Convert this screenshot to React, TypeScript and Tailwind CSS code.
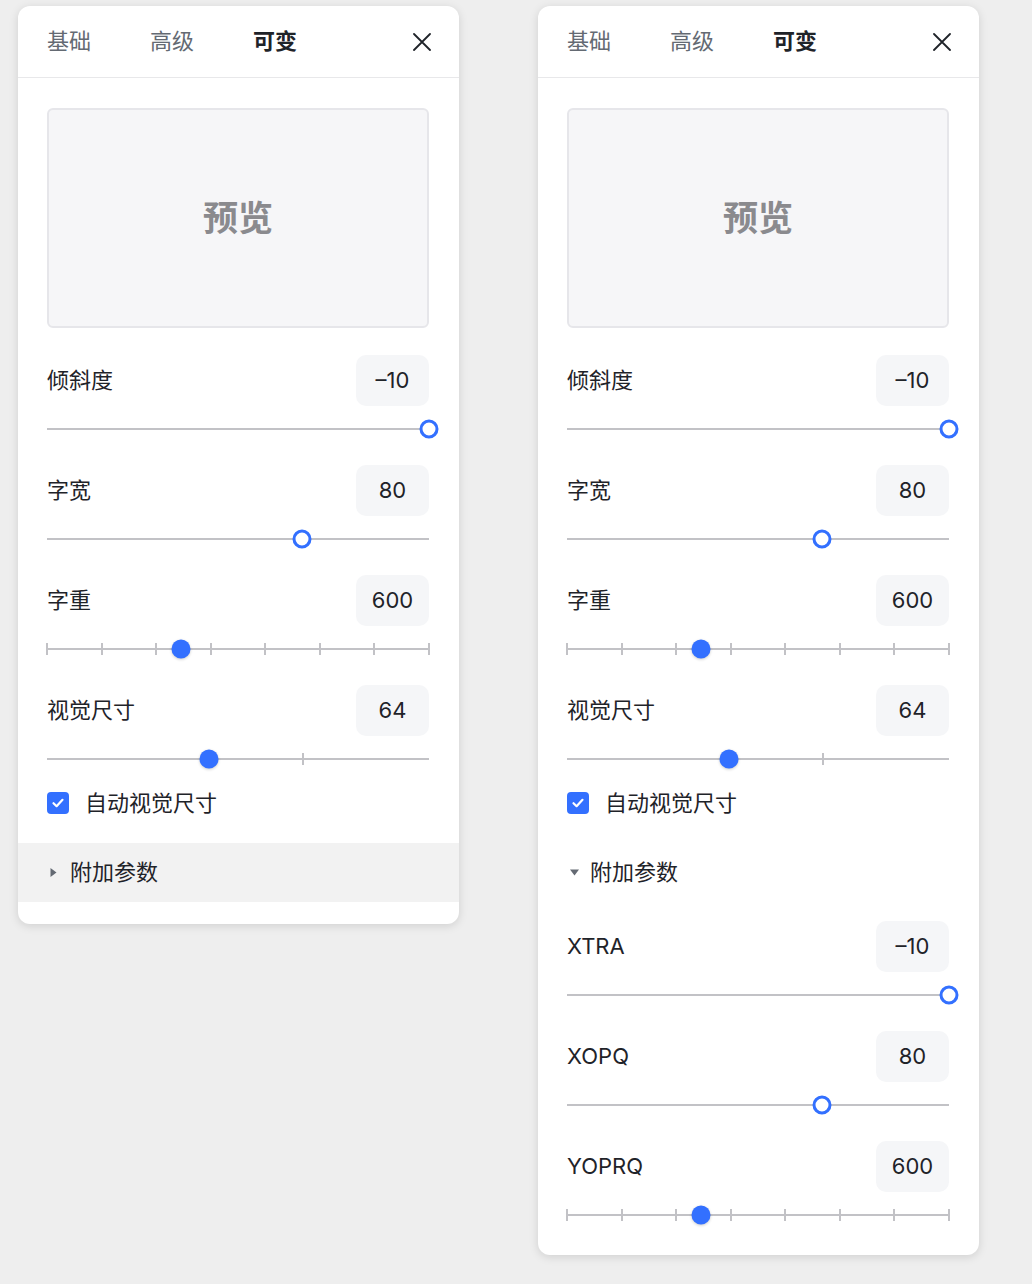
import type { ReactNode } from "react";

type SliderProps = {
  pct: number;
  hollow?: boolean;
  ticks?: number[];
};

function Slider({ pct, hollow = false, ticks = [] }: SliderProps) {
  return (
    <div className="relative flex h-[45px] items-center">
      <div className="h-[2px] w-full bg-[#c2c2c6]" />
      {ticks.map((tick) => (
        <div
          className="absolute top-1/2 h-[12px] w-[2px] -translate-x-1/2 -translate-y-1/2 bg-[#c2c2c6]"
          key={tick}
          style={{ left: `${tick}%` }}
        />
      ))}
      {hollow ? (
        <div
          className="absolute top-1/2 h-[19px] w-[19px] -translate-x-1/2 -translate-y-1/2 rounded-full border-[3px] border-[#3370ff] bg-white"
          style={{ left: `${pct}%` }}
        />
      ) : (
        <div
          className="absolute top-1/2 h-[19px] w-[19px] -translate-x-1/2 -translate-y-1/2 rounded-full bg-[#3370ff] shadow-[0_1px_3px_rgba(0,0,0,0.2)]"
          style={{ left: `${pct}%` }}
        />
      )}
    </div>
  );
}

function ParamRow({ label, value, children }: { label: string; value: string; children: ReactNode }) {
  return (
    <div>
      <div className="flex h-[51px] items-center justify-between">
        <span className="text-[22px] text-[#1f2329]">{label}</span>
        <div className="flex h-[51px] w-[73px] items-center justify-center rounded-[10px] bg-[#f5f6f8] text-[22px] text-[#1f2329]">
          {value}
        </div>
      </div>
      {children}
    </div>
  );
}

const eightTicks = [0, 100 / 7, 200 / 7, 300 / 7, 400 / 7, 500 / 7, 600 / 7, 100];

function CloseIcon() {
  return (
    <svg className="h-[18px] w-[18px]" fill="none" viewBox="0 0 18 18">
      <path d="M1 1L17 17M17 1L1 17" stroke="#1f2329" strokeLinecap="round" strokeWidth="1.8" />
    </svg>
  );
}

function Panel({ expanded }: { expanded: boolean }) {
  return (
    <div className="w-[441px] overflow-hidden rounded-[12px] bg-white shadow-[0_2px_10px_rgba(0,0,0,0.13)]">
      <div className="flex h-[72px] items-center border-b border-[#e8e8ea] pl-[29px] pr-[28px]">
        <span className="w-[103px] text-[22px] text-[#646a73]">基础</span>
        <span className="w-[103px] text-[22px] text-[#646a73]">高级</span>
        <span className="text-[22px] font-semibold text-[#1f2329]">可变</span>
        <button className="ml-auto flex items-center" type="button">
          <CloseIcon />
        </button>
      </div>

      <div className="pl-[29px] pr-[30px] pt-[30px]">
        <div className="flex h-[220px] items-center justify-center rounded-[6px] border-2 border-[#e6e6ea] bg-[#f6f6f8]">
          <span className="text-[35px] font-semibold text-[#8a8a8e]">预览</span>
        </div>

        <div className="mt-[27px] flex flex-col gap-[14px]">
          <ParamRow label="倾斜度" value="–10">
            <Slider hollow pct={100} />
          </ParamRow>
          <ParamRow label="字宽" value="80">
            <Slider hollow pct={66.75} />
          </ParamRow>
          <ParamRow label="字重" value="600">
            <Slider pct={35} ticks={eightTicks} />
          </ParamRow>
          <ParamRow label="视觉尺寸" value="64">
            <Slider pct={42.4} ticks={[67]} />
          </ParamRow>
        </div>

        <div className="mt-[11px] flex h-[22px] items-center">
          <div className="flex h-[22px] w-[22px] items-center justify-center rounded-[4px] bg-[#3370ff]">
            <svg className="h-[14px] w-[14px]" fill="none" viewBox="0 0 14 14">
              <path d="M2.5 7.2L5.6 10.2L11.5 3.8" stroke="white" strokeLinecap="round" strokeLinejoin="round" strokeWidth="2.2" />
            </svg>
          </div>
          <span className="ml-[16px] text-[22px] leading-none text-[#1f2329]">自动视觉尺寸</span>
        </div>
      </div>

      <div className={expanded ? "mt-[29px] flex h-[59px] items-center pl-[32px]" : "mt-[29px] flex h-[59px] items-center bg-[#f2f2f2] pl-[32px]"}>
        <div className="flex w-[20px] items-center">
          {expanded ? (
            <svg className="h-[7px] w-[9px]" viewBox="0 0 9 7">
              <path d="M0 0.5H9L4.5 6.5Z" fill="#646a73" />
            </svg>
          ) : (
            <svg className="h-[9px] w-[7px]" viewBox="0 0 7 9">
              <path d="M0.5 0V9L6.5 4.5Z" fill="#646a73" />
            </svg>
          )}
        </div>
        <span className="text-[22px] text-[#1f2329]">附加参数</span>
      </div>

      {expanded ? (
        <div className="flex flex-col gap-[14px] pb-[18px] pl-[29px] pr-[30px] pt-[19px]">
          <ParamRow label="XTRA" value="–10">
            <Slider hollow pct={100} />
          </ParamRow>
          <ParamRow label="XOPQ" value="80">
            <Slider hollow pct={66.75} />
          </ParamRow>
          <ParamRow label="YOPRQ" value="600">
            <Slider pct={35} ticks={eightTicks} />
          </ParamRow>
        </div>
      ) : (
        <div className="h-[22px]" />
      )}
    </div>
  );
}

export default function App() {
  return (
    <div
      className="flex min-h-[1284px] items-start gap-[79px] bg-[#eeeeee] pl-[18px] pt-[6px]"
      style={{ fontFamily: 'Inter, "Noto Sans CJK SC", sans-serif' }}
    >
      <Panel expanded={false} />
      <Panel expanded />
    </div>
  );
}
